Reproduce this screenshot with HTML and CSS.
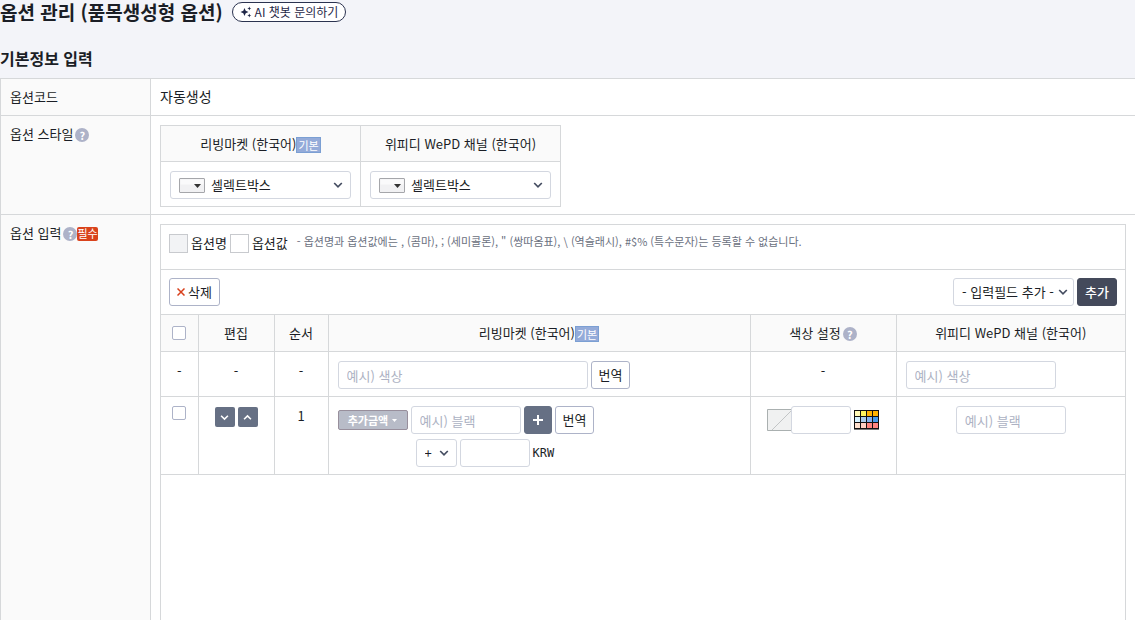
FILE: index.html
```html
<!DOCTYPE html>
<html lang="ko">
<head>
<meta charset="utf-8">
<title>옵션 관리</title>
<link rel="stylesheet" href="styles.css">
</head>
<body>
<svg class="defs" aria-hidden="true">
  <symbol id="chevron" viewBox="0 0 10 10"><path d="M1.200 3 5 6.800 8.800 3" fill="none" stroke="currentColor" stroke-width="1.700"/></symbol>
  <symbol id="mini-select" viewBox="0 0 26 15">
    <rect x=".5" y=".5" width="25" height="14" rx=".5" fill="#f1f1f3" stroke="#a5a6aa"/>
    <path d="M1.500 1.500h23v5h-23z" fill="#fafafb"/>
    <path d="M15 6h7l-3.500 4z" fill="#333"/>
  </symbol>
</svg>
<main class="page">
  <header class="page-head">
    <h1>옵션 관리 (품목생성형 옵션)</h1>
    <button type="button" class="ask">
      <svg width="12" height="12" viewBox="0 0 12 12" fill="#1f2747"><path d="M4.500 2 5.700 4.800 8.500 6 5.700 7.200 4.500 10 3.300 7.200.5 6 3.300 4.800z"/><path d="M9.300.5 9.900 1.900 11.300 2.500 9.900 3.100 9.300 4.500 8.700 3.100 7.300 2.500 8.700 1.900zM9.300 7.500 9.900 8.900 11.300 9.500 9.900 10.100 9.300 11.500 8.700 10.100 7.300 9.500 8.700 8.900z"/></svg>
      AI 챗봇 문의하기
    </button>
  </header>
  <h2>기본정보 입력</h2>
  <section class="form">
    <div class="form-row">
      <div class="form-label">옵션코드</div>
      <div class="form-cell auto-code">자동생성</div>
    </div>
    <div class="form-row">
      <div class="form-label">옵션 스타일<button type="button" class="help" aria-label="옵션 스타일 도움말">?</button></div>
      <div class="form-cell">
        <table class="grid style-table">
          <thead><tr><th>리빙마켓 (한국어)<span class="badge-base">기본</span></th><th>위피디 WePD 채널 (한국어)</th></tr></thead>
          <tbody><tr>
            <td><div class="select with-icon"><select aria-label="리빙마켓 옵션 스타일"><option>셀렉트박스</option></select><svg class="mini"><use href="#mini-select"/></svg><svg class="chev"><use href="#chevron"/></svg></div></td>
            <td><div class="select with-icon"><select aria-label="위피디 옵션 스타일"><option>셀렉트박스</option></select><svg class="mini"><use href="#mini-select"/></svg><svg class="chev"><use href="#chevron"/></svg></div></td>
          </tr></tbody>
        </table>
      </div>
    </div>
    <div class="form-row grow">
      <div class="form-label">옵션 입력<button type="button" class="help" aria-label="옵션 입력 도움말">?</button><span class="badge-required">필수</span></div>
      <div class="form-cell">
        <div class="option-box">
          <div class="legend">
            <span class="legend-item"><i class="swatch shaded"></i>옵션명</span>
            <span class="legend-item"><i class="swatch"></i>옵션값</span>
            <p class="note">- 옵션명과 옵션값에는 , (콤마), ; (세미콜론), " (쌍따옴표), \ (역슬래시), #$% (특수문자)는 등록할 수 없습니다.</p>
          </div>
          <div class="toolbar">
            <button type="button" class="btn"><svg width="8" height="8" viewBox="0 0 8 8"><path d="M.5.5l7 7M7.500.5l-7 7" stroke="#d8401c" stroke-width="1.500"/></svg>삭제</button>
            <div class="toolbar-end">
              <div class="select add-field"><select aria-label="입력필드 추가"><option>- 입력필드 추가 -</option></select><svg class="chev"><use href="#chevron"/></svg></div>
              <button type="button" class="btn dark">추가</button>
            </div>
          </div>
          <table class="grid option-table">
            <colgroup><col class="c-check"><col class="c-edit"><col class="c-order"><col><col class="c-color"><col class="c-channel"></colgroup>
            <thead><tr>
              <th><input type="checkbox" aria-label="전체 선택"></th>
              <th>편집</th><th>순서</th>
              <th>리빙마켓 (한국어)<span class="badge-base">기본</span></th>
              <th>색상 설정<button type="button" class="help" aria-label="색상 설정 도움말">?</button></th>
              <th>위피디 WePD 채널 (한국어)</th>
            </tr></thead>
            <tbody>
              <tr>
                <td>-</td><td>-</td><td>-</td>
                <td><div class="line"><input type="text" class="w-name" placeholder="예시) 색상" aria-label="옵션명"><button type="button" class="btn">번역</button></div></td>
                <td>-</td>
                <td><div class="line"><input type="text" class="w-channel" placeholder="예시) 색상" aria-label="채널 옵션명"></div></td>
              </tr>
              <tr>
                <td><input type="checkbox" aria-label="1번 선택"></td>
                <td><div class="moves">
                  <button type="button" class="move" aria-label="아래로"><svg><use href="#chevron"/></svg></button>
                  <button type="button" class="move up" aria-label="위로"><svg><use href="#chevron"/></svg></button>
                </div></td>
                <td>1</td>
                <td>
                  <div class="line">
                    <button type="button" class="extra">추가금액<svg width="5" height="3" viewBox="0 0 5 3"><path d="M0 0h5L2.500 3z" fill="#fff"/></svg></button>
                    <input type="text" class="w-value" placeholder="예시) 블랙" aria-label="옵션값">
                    <button type="button" class="btn plus" aria-label="옵션값 추가"><svg width="12" height="12" viewBox="0 0 12 12"><path d="M6 1v10M1 6h10" stroke="#fff" stroke-width="2"/></svg></button>
                    <button type="button" class="btn">번역</button>
                  </div>
                  <div class="line price">
                    <div class="select sign"><select aria-label="부호"><option>+</option></select><svg class="chev"><use href="#chevron"/></svg></div>
                    <input type="text" class="w-price" aria-label="추가금액"><span class="currency">KRW</span>
                  </div>
                </td>
                <td><div class="color-line">
                  <svg class="no-color" width="25" height="22" viewBox="0 0 25 22"><path d="M0 0h25v22H0z" fill="#f0f1f1"/><path d="M25 .5H.5v21H25" fill="none" stroke="#aab0b0"/><path d="M5 21 25 1" stroke="#c2c5c6"/></svg>
                  <input type="text" class="w-color" aria-label="색상 코드">
                  <button type="button" class="palette" aria-label="색상 선택"><svg width="25" height="20" viewBox="0 0 25 20"><path fill="#111" d="M0 0h25v19H0z"/><path fill="#777" d="M0 19h25v1H0z"/>
                    <path fill="#fff9b8" d="M1 1h5v5H1z"/><path fill="#fff45b" d="M7 1h5v5H7z"/><path fill="#ffb300" d="M13 1h5v5h-5zM19 1h5v5h-5z"/>
                    <path fill="#d5f0ff" d="M1 7h5v5H1z"/><path fill="#a9cdec" d="M7 7h5v5H7z"/><path fill="#82b3ef" d="M13 7h5v5h-5z"/><path fill="#479bea" d="M19 7h5v5h-5z"/>
                    <path fill="#ffe0cf" d="M1 13h5v5H1z"/><path fill="#ffd0c2" d="M7 13h5v5H7z"/><path fill="#ff8580" d="M13 13h5v5h-5zM19 13h5v5h-5z"/></svg></button>
                </div></td>
                <td><input type="text" class="w-value" placeholder="예시) 블랙" aria-label="채널 옵션값"></td>
              </tr>
            </tbody>
          </table>
        </div>
      </div>
    </div>
  </section>
</main>
</body>
</html>
```
FILE: styles.css
```css
* { box-sizing: border-box; }

:root {
  --line: #d6d8da;
  --field: #d3d7e0;
  --btn-line: #adb3c8;
  --ink: #1b1e26;
  --slate: #667084;
}

body {
  margin: 0;
  background: #f3f4f9;
  color: var(--ink);
  font: 13px/20px "Noto Sans CJK KR", "Noto Sans", sans-serif;
}

button, input, select { margin: 0; font: inherit; color: inherit; }
button { padding: 0; cursor: pointer; }
svg { display: block; }
.defs { position: absolute; width: 0; height: 0; }

.page { display: flex; flex-direction: column; min-height: 100vh; }
.page-head { display: flex; align-items: center; gap: 9px; height: 24px; }
h1 { margin: 0; font-size: 19px; line-height: 24px; font-weight: 700; }
h2 { margin: 22px 0 8px; font-size: 16px; line-height: 24px; font-weight: 700; }

.ask {
  display: flex;
  align-items: center;
  gap: 3px;
  height: 20px;
  padding: 0 7px;
  border: 1px solid #2b3350;
  border-radius: 10px;
  background: #fff;
  font-size: 12px;
  line-height: 18px;
  color: #1f2747;
}

.form { display: flex; flex-direction: column; flex: 1; border-top: 1px solid var(--line); }
.form-row {
  display: grid;
  grid-template-columns: 151px 1fr;
  border-bottom: 1px solid var(--line);
  background: #fff;
}
.form-row.grow { flex: 1; border-bottom: 0; }
.form-label {
  padding: 8px 9px;
  border: solid var(--line);
  border-width: 0 1px;
  background: #fafafa;
}
.form-cell { display: flex; flex-direction: column; min-width: 0; padding: 9px 9px 7px; }
.auto-code { padding-top: 7px; padding-bottom: 9px; font-size: 14px; }
.grow .form-cell { padding-bottom: 0; }

.help {
  width: 14px;
  height: 14px;
  margin-left: 2px;
  border: 0;
  border-radius: 50%;
  background: #adb2c8;
  color: #fff;
  font-size: 11px;
  line-height: 14px;
  font-weight: 700;
  vertical-align: -1px;
}
.badge-base {
  display: inline-block;
  height: 16px;
  padding: 0 1px;
  border: 1px solid #7b9fd3;
  background: #94abd9;
  color: #fff;
  font-size: 11px;
  line-height: 14px;
  vertical-align: middle;
}
.badge-required {
  display: inline-block;
  height: 14px;
  border-radius: 2px;
  background: #d9431c;
  color: #fff;
  font-size: 11px;
  line-height: 13px;
  vertical-align: middle;
}

.grid { border-collapse: collapse; table-layout: fixed; }
.grid th, .grid td { border: 1px solid var(--line); font-weight: 400; text-align: center; }
.grid th { height: 36px; padding: 0; background: #fafafa; }
.grid td { padding: 9px 9px 7px; vertical-align: top; }
.style-table { width: 401px; }

input[type="text"], .select select {
  height: 28px;
  border: 1px solid var(--field);
  border-radius: 3px;
  background: #fff;
}
input[type="text"] { display: block; padding: 0 8px; }
input::placeholder { color: #adb2c3; opacity: 1; }
input[type="checkbox"] {
  display: block;
  appearance: none;
  width: 14px;
  height: 14px;
  margin: 0 auto;
  border: 1px solid var(--btn-line);
  border-radius: 2px;
  background: #fff;
}

.select { position: relative; }
.select select { display: block; width: 100%; padding: 0 8px; appearance: none; }
.select svg { position: absolute; pointer-events: none; }
.select .chev { top: 9px; right: 8px; width: 10px; height: 10px; color: #454d61; }
.select .mini { top: 7px; left: 9px; width: 26px; height: 15px; }
.select.with-icon select { padding-left: 40px; }
.add-field { width: 121px; }
.add-field .chev { right: 6px; }
.sign { width: 41px; }

.option-box { flex: 1; border: 1px solid var(--line); border-bottom: 0; }
.legend { display: flex; gap: 3px; min-height: 44px; padding: 8px; }
.legend-item { display: flex; align-items: center; gap: 3px; height: 20px; }
.swatch { width: 19px; height: 19px; border: 1px solid #c8cace; background: #fff; }
.swatch.shaded { background: #f2f3f5; }
.note { margin: 0 0 0 6px; color: #6a7080; font-size: 11px; line-height: 16px; }

.toolbar {
  display: flex;
  align-items: center;
  justify-content: space-between;
  padding: 8px;
  border-top: 1px solid var(--line);
}
.toolbar-end { display: flex; gap: 3px; }
.btn {
  display: flex;
  align-items: center;
  justify-content: center;
  gap: 3px;
  height: 28px;
  padding: 0 7px;
  border: 1px solid var(--btn-line);
  border-radius: 3px;
  background: #fff;
}
.btn.dark { border-color: #444a5b; background: #444a5b; color: #fff; font-weight: 500; }
.btn.plus { width: 28px; padding: 0; border-color: var(--slate); background: var(--slate); }

.option-table { width: 100%; }
.option-table th { height: 37px; }
.option-table tr > :first-child { border-left: 0; }
.option-table tr > :last-child { border-right: 0; }
.c-check { width: 37px; }
.c-edit { width: 76px; }
.c-order { width: 54px; }
.c-color { width: 146px; }
.c-channel { width: 229px; }

.line { display: flex; align-items: center; gap: 3px; }
.price { margin-top: 5px; padding-left: 78px; }
.w-name { width: 250px; }
.w-channel { width: 150px; }
.w-value { width: 110px; }
.w-price { width: 70px; }
.w-color { width: 60px; }
td > .w-value { margin: 0 auto; }
.currency { font: 12px/20px "DejaVu Sans Mono", monospace; }

.moves { display: flex; justify-content: center; gap: 3px; padding-top: 1px; }
.move {
  display: flex;
  align-items: center;
  justify-content: center;
  width: 20px;
  height: 20px;
  border: 0;
  border-radius: 2px;
  background: var(--slate);
  color: #fff;
}
.move svg { width: 9px; height: 9px; }
.move.up svg { transform: rotate(180deg); }

.extra {
  display: flex;
  align-items: center;
  justify-content: center;
  gap: 4px;
  width: 70px;
  height: 20px;
  border: 1px solid #988f9c;
  border-radius: 2px;
  background: #b8bcc8;
  color: #fff;
  font-size: 11px;
  font-weight: 700;
  line-height: 16px;
}
.color-line { display: flex; align-items: center; justify-content: center; }
.no-color { margin-right: -1px; }
.palette { margin-left: 3px; border: 0; background: none; }
```
